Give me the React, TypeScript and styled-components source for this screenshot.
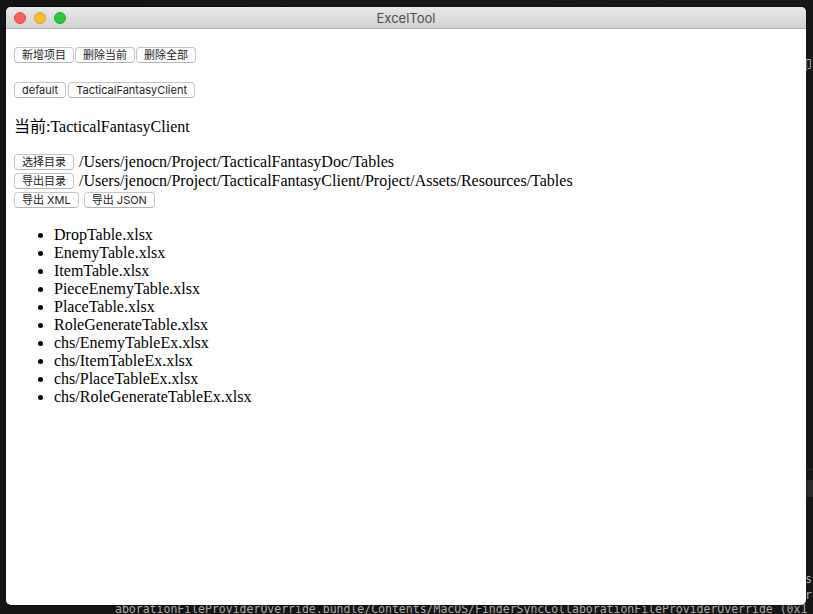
import styled, { createGlobalStyle } from "styled-components";

const files = [
  "DropTable.xlsx",
  "EnemyTable.xlsx",
  "ItemTable.xlsx",
  "PieceEnemyTable.xlsx",
  "PlaceTable.xlsx",
  "RoleGenerateTable.xlsx",
  "chs/EnemyTableEx.xlsx",
  "chs/ItemTableEx.xlsx",
  "chs/PlaceTableEx.xlsx",
  "chs/RoleGenerateTableEx.xlsx",
];

const App: React.FC = () => {
  return (
    <Desktop>
      <GlobalStyle />
      <TerminalText left={799} top={57} size={13}>
        印
      </TerminalText>
      <SideBand top={469} height={1} />
      <SideBand top={480} height={17} />
      <TerminalText left={805} top={571}>s</TerminalText>
      <TerminalText left={805} top={587}>r</TerminalText>
      <TerminalText left={115} top={601}>
        aborationFileProviderOverride.bundle/Contents/MacOS/FinderSyncCollaborationFileProviderOverride (0x1
      </TerminalText>

      <Window>
        <TitleBar>
          <Lights>
            <Light color="#fc5f57" ring="#de4a44" />
            <Light color="#fdbc2e" ring="#dea123" />
            <Light color="#29c840" ring="#1dac2c" />
          </Lights>
          <Title>ExcelTool</Title>
          <span />
        </TitleBar>

        <Content>
          <ButtonRow gap={1}>
            <Button>新增项目</Button>
            <Button>删除当前</Button>
            <Button>删除全部</Button>
          </ButtonRow>

          <ButtonRow gap={2} spaced>
            <Button>default</Button>
            <Button>TacticalFantasyClient</Button>
          </ButtonRow>

          <Current>当前:TacticalFantasyClient</Current>

          <PathRow first>
            <Button>选择目录</Button>
            <PathText>/Users/jenocn/Project/TacticalFantasyDoc/Tables</PathText>
          </PathRow>
          <PathRow>
            <Button>导出目录</Button>
            <PathText>
              /Users/jenocn/Project/TacticalFantasyClient/Project/Assets/Resources/Tables
            </PathText>
          </PathRow>
          <PathRow>
            <Button>导出 XML</Button>
            <Button>导出 JSON</Button>
          </PathRow>

          <FileList>
            {files.map((f) => (
              <li key={f}>{f}</li>
            ))}
          </FileList>
        </Content>
      </Window>
    </Desktop>
  );
};

const GlobalStyle = createGlobalStyle`
  html, body {
    margin: 0;
    padding: 0;
    background: #161616;
    overflow: hidden;
  }
`;

const Desktop = styled.div`
  position: relative;
  width: 813px;
  height: 614px;
  overflow: hidden;
  background: linear-gradient(90deg, #141414 0%, #171717 100%);
`;

const TerminalText = styled.div<{ left: number; top: number; size?: number }>`
  position: absolute;
  left: ${(p) => p.left}px;
  top: ${(p) => p.top}px;
  white-space: nowrap;
  font-family: "DejaVu Sans Mono", "Liberation Mono", "Noto Sans CJK SC", monospace;
  font-size: ${(p) => p.size ?? 11.5}px;
  line-height: 16px;
  color: #a9a9a9;
`;

const SideBand = styled.div<{ top: number; height: number }>`
  position: absolute;
  left: 806px;
  right: 0;
  top: ${(p) => p.top}px;
  height: ${(p) => p.height}px;
  background: #2a2a2a;
`;

const Window = styled.div`
  position: absolute;
  left: 6px;
  top: 7px;
  width: 800px;
  height: 598px;
  z-index: 1;
  display: flex;
  flex-direction: column;
  background: #ffffff;
  border-radius: 5px;
  overflow: hidden;
  box-shadow: 0 0 0 0.5px rgba(0, 0, 0, 0.6);
`;

const TitleBar = styled.div`
  flex: 0 0 22px;
  box-sizing: border-box;
  display: grid;
  grid-template-columns: 1fr auto 1fr;
  align-items: center;
  background: linear-gradient(#e8e8e8, #d3d3d3);
  border-bottom: 1px solid #b1b1b1;
`;

const Lights = styled.div`
  display: flex;
  gap: 8px;
  padding-left: 8px;
`;

const Light = styled.span<{ color: string; ring: string }>`
  width: 12px;
  height: 12px;
  box-sizing: border-box;
  border-radius: 50%;
  background: ${(p) => p.color};
  border: 0.5px solid ${(p) => p.ring};
`;

const Title = styled.div`
  font-family: Inter, "Liberation Sans", sans-serif;
  font-size: 13px;
  color: #4d4d4d;
`;

const Content = styled.div`
  flex: 1;
  padding: 18px 8px 0;
  font-family: "Liberation Serif", "Noto Sans CJK SC", serif;
  font-size: 16px;
  line-height: 18px;
  color: #000;
`;

const ButtonRow = styled.div<{ gap: number; spaced?: boolean }>`
  display: flex;
  gap: ${(p) => p.gap}px;
  margin-top: ${(p) => (p.spaced ? 19 : 0)}px;
`;

const Button = styled.button`
  box-sizing: border-box;
  height: 16px;
  margin: 0;
  padding: 0 7px;
  flex: none;
  font-family: Inter, "Liberation Sans", "Noto Sans CJK SC", sans-serif;
  font-size: 11px;
  line-height: 14px;
  color: #1c1c1c;
  background: #ffffff;
  border: 1px solid #c6c6c6;
  border-bottom-color: #b4b4b4;
  border-radius: 4px;
`;

const Current = styled.div`
  margin-top: 20px;
`;

const PathRow = styled.div<{ first?: boolean }>`
  display: flex;
  align-items: center;
  gap: 5px;
  height: 19px;
  margin-top: ${(p) => (p.first ? 16 : 0)}px;
`;

const PathText = styled.span`
  white-space: nowrap;
`;

const FileList = styled.ul`
  margin: 17px 0 0;
  padding-left: 40px;
  list-style: disc;
`;

export default App;
